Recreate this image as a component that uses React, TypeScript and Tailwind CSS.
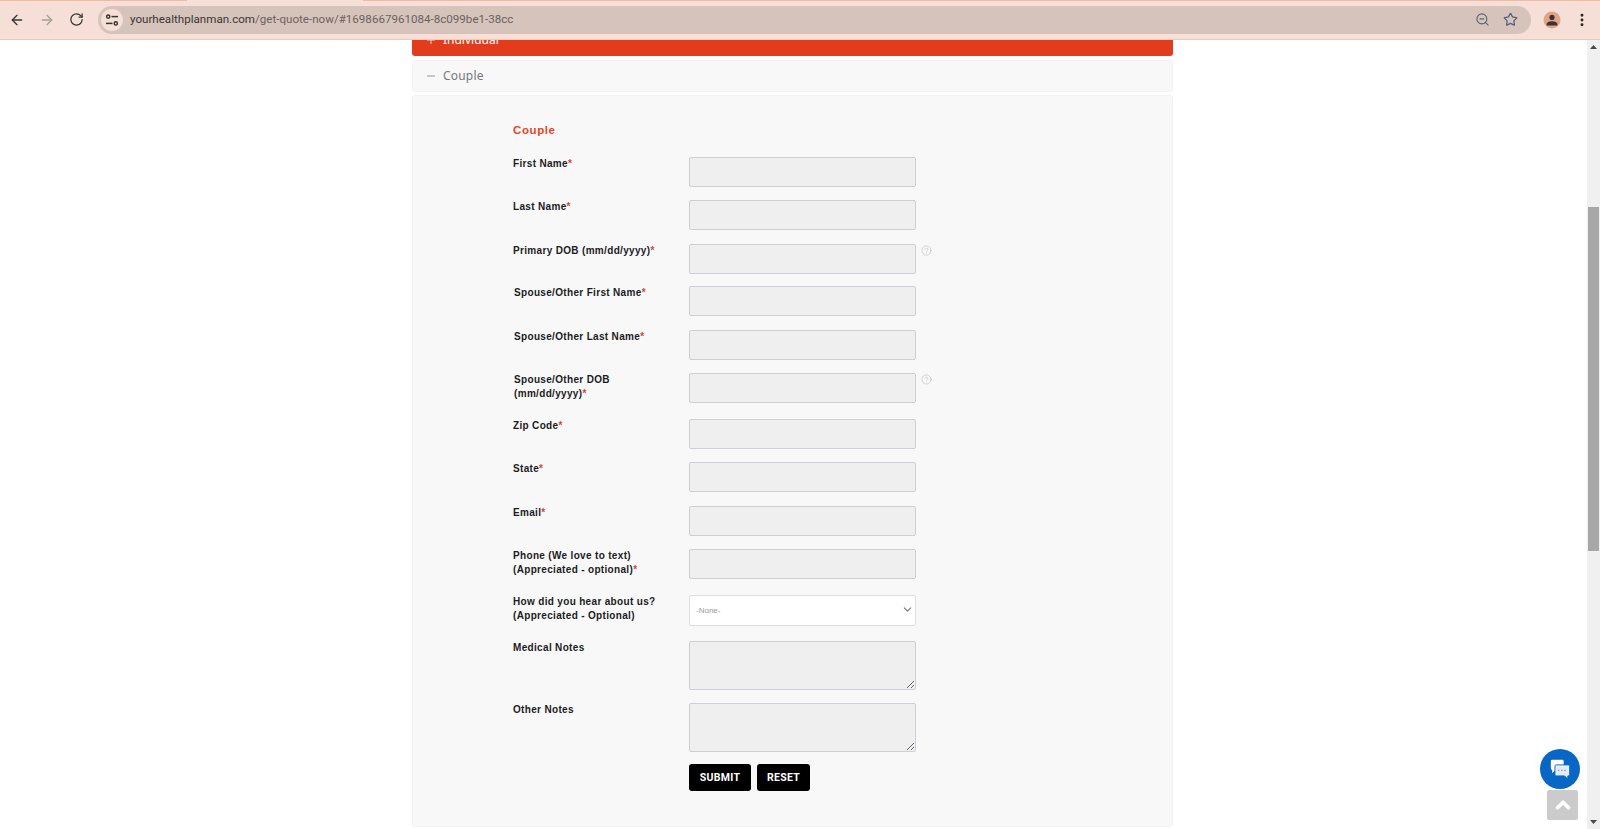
import { ArrowLeft, ArrowRight, RotateCw, ZoomOut, Star, EllipsisVertical, CircleHelp, ChevronDown, ChevronUp, Minus, Plus } from "lucide-react";

type Row = { label: string[]; h: string; kind?: "input" | "select" | "textarea"; help?: boolean; req?: boolean; shift?: string };

const rows: Row[] = [
  { label: ["First Name"], h: "h-[43px]", req: true },
  { label: ["Last Name"], h: "h-[44px]", req: true },
  { label: ["Primary DOB (mm/dd/yyyy)"], h: "h-[42px]", req: true, help: true },
  { label: ["Spouse/Other First Name"], h: "h-[44px]", req: true, shift: "pl-px" },
  { label: ["Spouse/Other Last Name"], h: "h-[43px]", req: true, shift: "pl-px" },
  { label: ["Spouse/Other DOB", "(mm/dd/yyyy)"], h: "h-[46px]", req: true, help: true, shift: "pl-px" },
  { label: ["Zip Code"], h: "h-[43px]", req: true },
  { label: ["State"], h: "h-[44px]", req: true },
  { label: ["Email"], h: "h-[43px]", req: true },
  { label: ["Phone (We love to text)", "(Appreciated - optional)"], h: "h-[46px]", req: true },
  { label: ["How did you hear about us?", "(Appreciated - Optional)"], h: "h-[46px]", kind: "select" },
  { label: ["Medical Notes"], h: "h-[62px]", kind: "textarea" },
  { label: ["Other Notes"], h: "h-[61px]", kind: "textarea" },
];

function SiteIcon() {
  return (
    <svg width="14" height="14" viewBox="0 0 14 14" fill="none" stroke="#3b3532" strokeWidth="1.5">
      <circle cx="3.2" cy="3.6" r="1.6" />
      <path d="M6.5 3.6H13" />
      <circle cx="10.8" cy="10.4" r="1.6" />
      <path d="M1 10.4H7.5" />
    </svg>
  );
}

function Avatar() {
  return (
    <svg width="18" height="18" viewBox="0 0 18 18">
      <circle cx="9" cy="9" r="8.5" fill="#e0a585" />
      <circle cx="9" cy="6.4" r="2.6" fill="#3f2f38" />
      <path d="M3.6 13.6c0-2.4 2.6-3.4 5.4-3.4s5.4 1 5.4 3.4v.8H3.6z" fill="#3f2f38" />
    </svg>
  );
}

function ChatIcon() {
  return (
    <svg width="22" height="22" viewBox="0 0 24 24">
      <path d="M2 3.5A1.5 1.5 0 0 1 3.5 2h11A1.5 1.5 0 0 1 16 3.5V13H7l-3.5 3.5V13H3.5A1.5 1.5 0 0 1 2 11.5z" fill="#ffffff" />
      <path d="M8 7.5h13a1.5 1.5 0 0 1 1.5 1.5v9a1.5 1.5 0 0 1-1.5 1.5h-.5V23L17 19.5H8A1.5 1.5 0 0 1 6.5 18V9A1.5 1.5 0 0 1 8 7.5z" fill="#e4ecf6" stroke="#0866c6" strokeWidth="1" />
      <circle cx="10.5" cy="13.5" r="0.9" fill="#8aa4c4" />
      <circle cx="14" cy="13.5" r="0.9" fill="#8aa4c4" />
      <circle cx="17.5" cy="13.5" r="0.9" fill="#8aa4c4" />
    </svg>
  );
}

function Field({ kind }: { kind?: Row["kind"] }) {
  if (kind === "select") {
    return (
      <div className="relative w-[227px] h-[31px]">
        <select className="appearance-none w-full h-full bg-white border border-[#dcdfe2] rounded-[2px] pl-[6px] text-[8px] text-[#9a9a9a] font-['Liberation_Sans',sans-serif] outline-none">
          <option>-None-</option>
        </select>
        <ChevronDown size={13} strokeWidth={2} className="absolute right-[2px] top-[8px] text-[#777777]" />
      </div>
    );
  }
  if (kind === "textarea") {
    return <textarea className="block w-[227px] h-[49px] bg-[#efefef] border border-[#ccd0d5] rounded-[2px] outline-none" />;
  }
  return <input className="block w-[227px] h-[30px] bg-[#efefef] border border-[#ccd0d5] rounded-[2px] outline-none" />;
}

export default function App() {
  return (
    <div className="h-[829px] w-[1600px] flex flex-col overflow-hidden bg-white font-['Liberation_Sans',sans-serif]">
      {/* browser toolbar */}
      <header className="relative z-10 h-[40px] shrink-0 bg-[#f6dfd7] border-b border-[#e8c9be] flex items-center">
        <div className="absolute top-0 left-0 w-[187px] h-px bg-[#efb9a6]" />
        <div className="absolute top-0 left-[363px] right-0 h-px bg-[#efb9a6]" />
        <div className="w-[98px] shrink-0 flex items-center pl-[9px] gap-[14px]">
          <ArrowLeft size={16} strokeWidth={2} className="text-[#3a3431]" />
          <ArrowRight size={16} strokeWidth={2} className="text-[#a89e9a]" />
          <RotateCw size={15} strokeWidth={2} className="text-[#3a3431]" />
        </div>
        <div className="w-[1433px] h-[28px] bg-[#d6c4bc] rounded-full flex items-center pl-[3px] pr-[13px]">
          <div className="w-[22px] h-[22px] rounded-full bg-[#f6dfd7] flex items-center justify-center">
            <SiteIcon />
          </div>
          <div className="ml-[7px] text-[11.6px] font-['Roboto',sans-serif] text-[#3b3532] whitespace-nowrap">
            yourhealthplanman.com<span className="text-[#6c625d]">/get-quote-now/#1698667961084-8c099be1-38cc</span>
          </div>
          <div className="ml-auto flex items-center gap-[13px]">
            <ZoomOut size={15} strokeWidth={1.8} className="text-[#5a6474]" />
            <Star size={15} strokeWidth={2} className="text-[#55607a]" />
          </div>
        </div>
        <div className="ml-[12px]"><Avatar /></div>
        <EllipsisVertical size={16} strokeWidth={2.4} className="ml-[13px] text-[#2b2725]" />
      </header>

      <div className="flex-1 flex min-h-0">
        {/* page */}
        <main className="flex-1 min-w-0 overflow-hidden pr-[2px]">
          <div className="w-[761px] mx-auto flex flex-col">
            <div className="-mt-[17px] h-[33px] bg-[#e23c1c] rounded-[3px] flex items-center pl-[13px] text-white">
              <Plus size={12} strokeWidth={1.5} />
              <span className="ml-[6px] text-[12px] font-['Noto_Sans',sans-serif]">Individual</span>
            </div>
            <div className="mt-[4px] h-[32px] bg-[#f8f8f8] border border-[#f2f2f2] rounded-[3px] flex items-center pl-[12px] text-[#777777]">
              <Minus size={12} strokeWidth={1.5} />
              <span className="ml-[6px] text-[12px] tracking-[0.2px] font-['Noto_Sans',sans-serif]">Couple</span>
            </div>
            <section className="mt-[3px] h-[732px] bg-[#f8f8f8] border border-[#f2f2f2] rounded-[3px] pl-[100px] pt-[27px]">
              <h2 className="h-[34px] text-[11.5px] leading-[14px] font-bold tracking-[0.6px] text-[#e2461f]">Couple</h2>
              {rows.map((r) => (
                <div key={r.label[0]} className={`flex ${r.h}`}>
                  <label className={`w-[176px] shrink-0 text-[10px] leading-[14.4px] font-bold tracking-[0.33px] text-[#1c1c24] ${r.shift ?? ""}`}>
                    {r.label.map((l, i) => (
                      <div key={l} className="whitespace-nowrap">
                        {l}
                        {r.req && i === r.label.length - 1 && <span className="text-[#e0402e]">*</span>}
                      </div>
                    ))}
                  </label>
                  <Field kind={r.kind} />
                  {r.help && <CircleHelp size={11} strokeWidth={1.5} className="ml-[5px] mt-[1px] text-[#c0c0c0]" />}
                </div>
              ))}
              <div className="flex pl-[176px] gap-[6px]">
                <button className="w-[62px] h-[27px] bg-black rounded-[3px] text-white text-[10.5px] font-bold tracking-[0.3px] font-['Roboto',sans-serif]">SUBMIT</button>
                <button className="w-[53px] h-[27px] bg-black rounded-[3px] text-white text-[10.5px] font-bold tracking-[0.3px] font-['Roboto',sans-serif]">RESET</button>
              </div>
            </section>
          </div>
        </main>

        {/* scrollbar */}
        <aside className="w-[13px] shrink-0 bg-[#f0f0f0] flex flex-col items-center">
          <svg className="mt-[5px]" width="7" height="4" viewBox="0 0 7 4"><path d="M3.5 0L7 4H0z" fill="#4a4a4a" /></svg>
          <div className="mt-[158px] w-[11px] h-[344px] bg-[#a8a8a8]" />
          <svg className="mt-auto mb-[5px]" width="7" height="4" viewBox="0 0 7 4"><path d="M0 0h7L3.5 4z" fill="#4a4a4a" /></svg>
        </aside>
      </div>

      {/* floating widgets */}
      <div className="fixed left-[1540px] top-[749px] w-[40px] h-[40px] rounded-full bg-[#0866c6] flex items-center justify-center">
        <ChatIcon />
      </div>
      <div className="fixed left-[1547px] top-[790px] w-[31px] h-[30px] rounded-[2px] bg-[#cbcbcb] flex items-center justify-center">
        <ChevronUp size={22} strokeWidth={4} className="text-white" />
      </div>
    </div>
  );
}
